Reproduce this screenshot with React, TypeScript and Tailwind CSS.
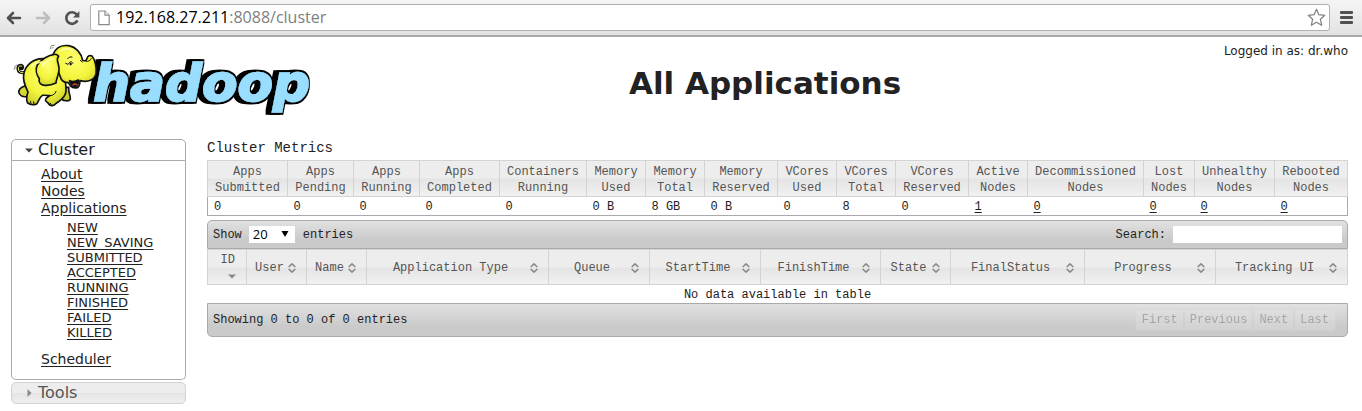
import React from "react";

const verdana = "font-['DejaVu_Sans',sans-serif]";
const mono = "font-['Liberation_Mono',monospace]";

const metrics = [
  { head: ["Apps", "Submitted"], value: "0", col: "w-[80px]" },
  { head: ["Apps", "Pending"], value: "0", col: "w-[66px]" },
  { head: ["Apps", "Running"], value: "0", col: "w-[66px]" },
  { head: ["Apps", "Completed"], value: "0", col: "w-[80px]" },
  { head: ["Containers", "Running"], value: "0", col: "w-[87px]" },
  { head: ["Memory", "Used"], value: "0 B", col: "w-[59px]" },
  { head: ["Memory", "Total"], value: "8 GB", col: "w-[59px]" },
  { head: ["Memory", "Reserved"], value: "0 B", col: "w-[73px]" },
  { head: ["VCores", "Used"], value: "0", col: "w-[59px]" },
  { head: ["VCores", "Total"], value: "8", col: "w-[59px]" },
  { head: ["VCores", "Reserved"], value: "0", col: "w-[73px]" },
  { head: ["Active", "Nodes"], value: "1", col: "w-[59px]", link: true },
  { head: ["Decommissioned", "Nodes"], value: "0", col: "w-[116px]", link: true },
  { head: ["Lost", "Nodes"], value: "0", col: "w-[51px]", link: true },
  { head: ["Unhealthy", "Nodes"], value: "0", col: "w-[80px]", link: true },
  { head: ["Rebooted", "Nodes"], value: "0", col: "w-[73px]", link: true },
];

const columns = [
  { name: "ID", col: "w-[39px]", sorted: true },
  { name: "User", col: "w-[60px]" },
  { name: "Name", col: "w-[60px]" },
  { name: "Application Type", col: "w-[182px]" },
  { name: "Queue", col: "w-[101px]" },
  { name: "StartTime", col: "w-[111px]" },
  { name: "FinishTime", col: "w-[120px]" },
  { name: "State", col: "w-[70px]" },
  { name: "FinalStatus", col: "w-[134px]" },
  { name: "Progress", col: "w-[131px]" },
  { name: "Tracking UI", col: "w-[132px]" },
];

const states = ["NEW", "NEW_SAVING", "SUBMITTED", "ACCEPTED", "RUNNING", "FINISHED", "FAILED", "KILLED"];

function BrowserBar() {
  return (
    <div className="flex h-[37px] items-center border-b-2 border-[#a9a9a9] bg-linear-to-b from-[#f5f5f5] to-[#e2e2e2] pl-[6px] pr-[9px]">
      <button aria-label="Back" className="mr-[13px]">
        <svg width="16" height="14" viewBox="0 0 16 14" fill="none" stroke="#505050" strokeWidth="2.6" strokeLinecap="round" strokeLinejoin="round">
          <path d="M7 2 L2 7 L7 12 M2.5 7 H14" />
        </svg>
      </button>
      <button aria-label="Forward" className="mr-[13px]">
        <svg width="16" height="14" viewBox="0 0 16 14" fill="none" stroke="#bdbdbd" strokeWidth="2.6" strokeLinecap="round" strokeLinejoin="round">
          <path d="M9 2 L14 7 L9 12 M13.5 7 H2" />
        </svg>
      </button>
      <button aria-label="Reload" className="mr-[10px]">
        <svg width="16" height="16" viewBox="0 0 16 16" fill="none">
          <path d="M12.6 4.4 A5.8 5.8 0 1 0 13.4 10.4" stroke="#505050" strokeWidth="2.6" />
          <path d="M15.4 1 V7.4 H9 Z" fill="#505050" />
        </svg>
      </button>
      <div className="flex h-[27px] flex-1 items-center rounded-[3px] border border-[#b0b0b0] bg-white pl-[7px] pr-[3px]">
        <svg width="12" height="16" viewBox="0 0 12 16" fill="#fff" stroke="#8a8a8a" strokeWidth="1.2" className="mr-[6px]">
          <path d="M0.8 1 H7 L11.2 5.2 V14.6 H0.8 Z" />
          <path d="M7 1 V5.2 H11.2" />
        </svg>
        <div className="flex-1 pb-[2px] font-['Open_Sans',sans-serif] text-[16px] leading-6 text-[#808080]">
          <span className="text-black">192.168.27.211</span>:8088/cluster
        </div>
        <button aria-label="Bookmark">
          <svg width="19" height="19" viewBox="0 0 19 19" fill="#fff" stroke="#808080" strokeWidth="1.2" strokeLinejoin="round">
            <path d="M9.5 1.2 L11.9 6.7 L17.8 7.3 L13.4 11.3 L14.7 17.3 L9.5 14.2 L4.3 17.3 L5.6 11.3 L1.2 7.3 L7.1 6.7 Z" />
          </svg>
        </button>
      </div>
      <button aria-label="Menu" className="ml-[10px]">
        <svg width="13" height="14" viewBox="0 0 13 14" fill="#505050">
          <rect width="13" height="3" y="0" rx="1" />
          <rect width="13" height="3" y="5" rx="1" />
          <rect width="13" height="3" y="10" rx="1" />
        </svg>
      </button>
    </div>
  );
}

function HadoopLogo() {
  return (
    <svg width="300" height="75" viewBox="36 126 900 225" role="img" aria-label="hadoop" className="block">
      <defs>
        <radialGradient id="hide" cx="0.5" cy="0.35" r="0.7">
          <stop offset="0" stopColor="#ffff70" />
          <stop offset="0.6" stopColor="#f3f43c" />
          <stop offset="1" stopColor="#c9cb2c" />
        </radialGradient>
        <filter id="extrude" x="-0.1" y="-0.1" width="1.2" height="1.2">
          <feMorphology in="SourceAlpha" operator="dilate" radius="6 5" result="fat" />
          <feOffset in="fat" dx="-4" dy="0" result="near" />
          <feOffset in="fat" dx="-11" dy="0" result="far" />
          <feMerge>
            <feMergeNode in="far" />
            <feMergeNode in="near" />
            <feMergeNode in="SourceGraphic" />
          </feMerge>
        </filter>
      </defs>
      <text
        x="280"
        y="303"
        fontFamily="DejaVu Sans"
        fontWeight="bold"
        fontStyle="oblique"
        fontSize="155"
        fill="#99ddff"
        stroke="#99ddff"
        strokeWidth="5"
        strokeLinejoin="miter"
        filter="url(#extrude)"
      >
        hadoop
      </text>
      <g stroke="#111" strokeWidth="5" strokeLinejoin="round" strokeLinecap="round">
        <path d="M78 215 C66 222 55 217 54 207 C53 197 62 193 67 198 C71 203 65 209 62 205" fill="none" strokeWidth="9" />
        <path d="M78 215 C66 222 56 217 55 207 C54 198 62 195 66 199" fill="none" stroke="#eef04a" strokeWidth="3" />
        <path d="M188 262 C184 278 180 290 184 297 C192 304 208 304 211 298 C212 287 205 278 206 262 Z" fill="#c9cb2c" />
        <path d="M74 258 C62 262 55 270 57 279 C61 288 70 291 80 290 L92 270 Z" fill="#d5d733" />
        <path d="M128 176 C98 176 74 198 71 225 C68 246 78 262 84 276 C79 290 79 302 83 309 C91 315 106 316 111 311 C116 302 119 291 127 286 C137 285 146 287 149 287 C140 292 135 297 137 302 C140 307 145 308 146 312 C151 319 163 318 167 311 C178 304 190 297 196 282 C201 270 196 252 196 240 L174 180 Z" fill="url(#hide)" />
        <path d="M158 165 C166 145 183 134 205 137 C229 141 244 160 248 181 C255 184 260 181 261 175 C263 167 270 165 276 168 C285 178 291 205 288 221 C284 240 264 248 240 242 C240 255 235 264 226 264 C215 262 208 255 206 248 C194 248 184 243 181 231 Z" fill="url(#hide)" />
        <path d="M163 163 C146 165 124 177 112 195 C105 208 110 225 118 236 C114 247 122 255 134 256 C146 257 160 253 168 249 C167 241 178 222 177 205 C176 187 166 178 176 169 C172 164 168 162 163 163 Z" fill="url(#hide)" />
        <path d="M209 242 C216 246 226 245 235 240 C236 252 231 261 225 261 C216 259 211 251 209 242 Z" fill="#111" />
        <path d="M219 255 C224 250 229 252 231 255" fill="none" stroke="#d84438" strokeWidth="4" />
        <path d="M197 190 L204 193 M206 191 C209 183 216 183 219 190 M241 181 L247 186" fill="none" strokeWidth="3" />
        <ellipse cx="212" cy="192" rx="2.5" ry="4" fill="#111" strokeWidth="1" />
        <path d="M203 176 C207 171 211 170 216 171 M258 184 C265 185 271 182 274 176" fill="none" strokeWidth="3" />
        <path d="M151 287 C161 286 166 281 168 274 M91 304 L93 309 M101 305 L101 311 M150 309 L154 314" fill="none" strokeWidth="3" />
      </g>
      <path d="M150 148 L154 137 L164 136 M156 146 L160 141 M42 209 L45 199 L52 194 M48 207 L49 202" stroke="#888" strokeWidth="3" fill="none" />
      <path d="M95 198 C105 188 118 186 128 187 M180 153 C194 145 208 145 218 152 M128 197 C138 185 149 178 158 177" stroke="#ffffb0" strokeWidth="6" strokeLinecap="round" fill="none" opacity="0.8" />
    </svg>
  );
}

function Sidebar() {
  return (
    <nav className={`${verdana} w-[175px] shrink-0 text-[#222]`}>
      <button className="flex h-[22px] w-full items-center rounded-t-[5px] border border-[#aaa] pl-[13px] text-left text-[16px]">
        <svg width="8" height="5" viewBox="0 0 8 5" className="mr-[5px]">
          <path d="M0 0.5 H8 L4 4.5 Z" fill="#454545" />
        </svg>
        Cluster
      </button>
      <div className="rounded-b-[5px] border border-t-0 border-[#aaa] pb-[11px] pl-[29px] pt-[5px] text-[14px] leading-[17px] underline-offset-2">
        <ul>
          <li><a href="#about" className="underline">About</a></li>
          <li><a href="#nodes" className="underline">Nodes</a></li>
          <li>
            <a href="#apps" className="underline">Applications</a>
            <ul className="pb-[11px] pl-[26px] pt-[3px] text-[13px] leading-[15px]">
              {states.map((s) => (
                <li key={s}><a href={`#${s}`} className="underline">{s}</a></li>
              ))}
            </ul>
          </li>
          <li><a href="#scheduler" className="underline">Scheduler</a></li>
        </ul>
      </div>
      <button className="mt-[2px] flex h-[22px] w-full items-center rounded-[5px] border border-[#d3d3d3] bg-linear-to-b from-[#ededed] from-50% via-[#e4e4e4] via-50% to-[#efefef] pl-[15px] text-left text-[16px] text-[#555]">
        <svg width="5" height="8" viewBox="0 0 5 8" className="mr-[6px]">
          <path d="M0.5 0 V8 L4.5 4 Z" fill="#888" />
        </svg>
        Tools
      </button>
    </nav>
  );
}

const headCell = "border border-[#d3d3d3] bg-linear-to-b from-[#ededed] from-50% via-[#e4e4e4] via-50% to-[#f1f1f1] font-normal text-[#555]";

function Metrics() {
  return (
    <table className="w-full table-fixed border-collapse border border-[#aaa] text-[12px] leading-4">
      <colgroup>{metrics.map((m, i) => <col key={i} className={m.col} />)}</colgroup>
      <thead>
        <tr>
          {metrics.map((m, i) => (
            <th key={i} className={`${headCell} pt-[3px]`}>
              {m.head[0]}<br />{m.head[1]}
            </th>
          ))}
        </tr>
      </thead>
      <tbody>
        <tr>
          {metrics.map((m, i) => (
            <td key={i} className="pl-[6px] pt-[2px] text-[#222]">
              {m.link ? <a href="#nodes" className="underline underline-offset-2">{m.value}</a> : m.value}
            </td>
          ))}
        </tr>
      </tbody>
    </table>
  );
}

function SortIcon({ sorted }: { sorted?: boolean }) {
  return sorted ? (
    <svg width="8" height="5" viewBox="0 0 8 5"><path d="M0 0.5 H8 L4 4.5 Z" fill="#888" /></svg>
  ) : (
    <svg width="8" height="10" viewBox="0 0 8 10" fill="none" stroke="#888" strokeWidth="1.6">
      <path d="M0.7 4 L4 0.9 L7.3 4 M0.7 6 L4 9.1 L7.3 6" />
    </svg>
  );
}

const toolbar = "flex items-center border border-[#aaa] bg-linear-to-b from-[#e1e1e1] to-[#cacaca] to-70%";
const pager = "h-[22px] border border-[#d3d3d3] bg-[#e6e6e6] px-[5px] text-[#555] first:rounded-l-[4px] first:pl-[6px] last:rounded-r-[4px] last:pr-[6px]";

function Applications() {
  return (
    <section className="mt-[4px] text-[12px] leading-4 text-[#222]">
      <div className={`${toolbar} h-[29px] justify-between rounded-t-[5px] pl-[5px] pr-[5px]`}>
        <label className="flex items-center">
          Show
          <span className="relative ml-[7px] mr-[8px] flex">
            <select defaultValue="20" className="h-[17px] w-[46px] appearance-none bg-white pl-[4px] font-['Open_Sans',sans-serif] text-[13px] leading-[17px] text-black">
              <option>20</option>
              <option>50</option>
              <option>100</option>
            </select>
            <svg width="8" height="6" viewBox="0 0 8 6" className="pointer-events-none absolute right-[6px] top-[5px]">
              <path d="M0.5 0 H7.5 L4 6 Z" fill="#000" />
            </svg>
          </span>
          entries
        </label>
        <label className="flex items-center">
          Search:
          <input type="text" className="ml-[7px] h-[17px] w-[169px] bg-white px-1" />
        </label>
      </div>
      <table className="w-full table-fixed border-collapse border border-transparent">
        <colgroup>{columns.map((c) => <col key={c.name} className={c.col} />)}</colgroup>
        <thead>
          <tr>
            {columns.map((c) => (
              <th key={c.name} className={`${headCell} h-[35px] pl-[8px] pr-[10px] pt-[2px]`}>
                {c.sorted ? (
                  <div className="flex flex-col items-end">
                    <span className="pr-[1px]">{c.name}</span>
                    <span className="flex h-4 items-center"><SortIcon sorted /></span>
                  </div>
                ) : (
                  <div className="flex items-center">
                    <span className="flex-1 whitespace-nowrap">{c.name}</span>
                    <span className="ml-[4px]"><SortIcon /></span>
                  </div>
                )}
              </th>
            ))}
          </tr>
        </thead>
        <tbody>
          <tr><td colSpan={11} className="pt-[3px] text-center leading-[14px]">No data available in table</td></tr>
        </tbody>
      </table>
      <div className={`${toolbar} h-[34px] justify-between rounded-b-[5px] pl-[5px] pr-[11px]`}>
        <span>Showing 0 to 0 of 0 entries</span>
        <div className="flex opacity-35">
          <button disabled className={pager}>First</button>
          <button disabled className={pager}>Previous</button>
          <button disabled className={pager}>Next</button>
          <button disabled className={pager}>Last</button>
        </div>
      </div>
    </section>
  );
}

export default function App() {
  return (
    <div className="bg-white">
      <BrowserBar />
      <header className={`${verdana} flex h-[102px] pl-[12px] pr-[14px] pt-[5px] text-[#222]`}>
        <HadoopLogo />
        <h1 className="flex-1 pt-[17px] text-center text-[31px] font-bold leading-[48px]">All Applications</h1>
        <div className="min-w-[130px] pt-[1px] text-right text-[12px] leading-[17px]">Logged in as: dr.who</div>
      </header>
      <div className="flex gap-[21px] pl-[11px] pr-[14px]">
        <Sidebar />
        <main className={`${mono} min-w-0 flex-1`}>
          <h2 className="pb-[3px] text-[14px] leading-[18px] text-[#222]">Cluster Metrics</h2>
          <Metrics />
          <Applications />
        </main>
      </div>
    </div>
  );
}
